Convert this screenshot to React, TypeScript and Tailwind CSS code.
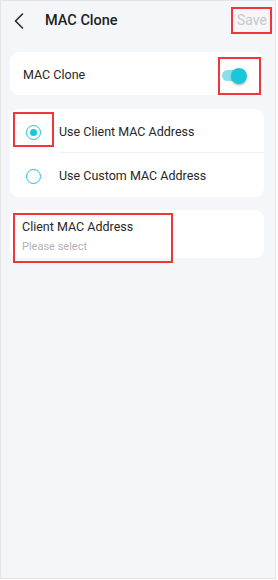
export default function App() {
  return (
    <div className="h-[580px] w-[278px] bg-white" style={{ fontFamily: "Roboto, 'Noto Sans', sans-serif" }}>
      <div className="relative h-[579px] w-[276px] border border-[#e4e4e4] bg-[#f5f6fa]">
        {/* header */}
        <div className="flex h-[38px] items-center pl-[13px] pr-[8px] pt-[1px]">
          <svg width="10" height="16" viewBox="0 0 10 16" fill="none">
            <polyline points="8.5,1 1.5,8 8.5,15" stroke="#2a2a2a" strokeWidth="1.6" strokeLinecap="round" strokeLinejoin="round" />
          </svg>
          <span className="ml-[21px] text-[14.5px] font-medium text-[#1f1f1f]">MAC Clone</span>
          <span className="ml-auto text-[14px] text-[#c9c9cc]">Save</span>
        </div>

        {/* switch card */}
        <div className="mt-[13px] ml-[9px] flex h-[43px] w-[254px] items-center rounded-[9px] bg-white pl-[13px] pr-[17px] pt-[4px]">
          <span className="text-[12.5px] text-[#262626]">MAC Clone</span>
          <div className="relative ml-auto h-[16px] w-[25px]">
            <div className="absolute left-0 top-[2.5px] h-[11px] w-[20px] rounded-full bg-[#86e0ea]" />
            <div className="absolute right-0 top-0 h-[16px] w-[16px] rounded-full bg-[#1cc6da] shadow-[0_1.5px_2px_rgba(0,0,0,0.25)]" />
          </div>
        </div>

        {/* radio card */}
        <div className="mt-[14px] ml-[9px] w-[254px] rounded-[9px] bg-white">
          <div className="flex h-[43px] items-center pl-[16px] pt-[3px]">
            <span className="flex h-[15px] w-[15px] items-center justify-center rounded-full border-[1.6px] border-[#1cc6da]">
              <span className="h-[7px] w-[7px] rounded-full bg-[#1cc6da]" />
            </span>
            <span className="ml-[18px] text-[12.5px] text-[#262626]">Use Client MAC Address</span>
          </div>
          <div className="ml-[49px] h-px bg-[#f0f0f2]" />
          <div className="flex h-[44px] items-center pl-[16px] pt-[2px]">
            <span className="h-[15px] w-[15px] rounded-full border-[1.6px] border-[#1cc6da]" />
            <span className="ml-[18px] text-[12.5px] text-[#262626]">Use Custom MAC Address</span>
          </div>
        </div>

        {/* client mac card */}
        <div className="mt-[13px] ml-[9px] flex h-[48px] w-[254px] flex-col gap-[5px] rounded-[9px] bg-white pl-[12px] pt-[9px]">
          <span className="text-[12.5px] leading-[16px] text-[#262626]">Client MAC Address</span>
          <span className="text-[11px] leading-[14px] text-[#b3b3b6]">Please select</span>
        </div>

        {/* annotation boxes */}
        <div className="absolute left-[230px] top-[6px] h-[27px] w-[41px] border-2 border-[#f0353b]" />
        <div className="absolute left-[217px] top-[56px] h-[38px] w-[43px] border-2 border-[#f0353b]" />
        <div className="absolute left-[12px] top-[111px] h-[35px] w-[41px] border-2 border-[#f0353b]" />
        <div className="absolute left-[12px] top-[212px] h-[50px] w-[160px] border-2 border-[#f0353b]" />
      </div>
    </div>
  );
}
